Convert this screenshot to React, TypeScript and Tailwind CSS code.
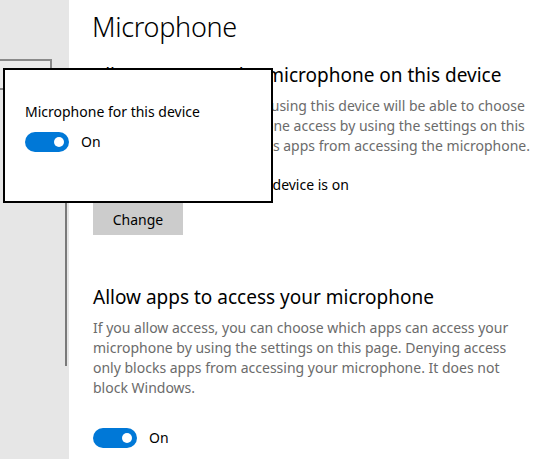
export default function App() {
  const font = { fontFamily: '"Segoe UI", "Noto Sans", "Open Sans", sans-serif' };
  return (
    <div className="relative flex h-[459px] w-[540px] overflow-hidden bg-white" style={font}>
      <div className="relative w-[69px] shrink-0 bg-[#e6e6e6]">
        <div className="mt-[59px] ml-[-10px] h-[31px] w-[62px] border-2 border-[#8a8a8a] bg-[#ebebeb]" />
        <div className="absolute left-[65px] top-[200px] h-[166px] w-[2px] bg-[#7a7a7a]" />
      </div>
      <div className="flex flex-col pl-[24px] pt-[8px]">
        <div className="ml-[-1px] text-[27px] font-light leading-[38px] tracking-[-0.3px] text-black">Microphone</div>
        <div className="mt-[15px] text-[19px] leading-[28px] text-black">Allow access to the microphone on this device</div>
        <div className="mt-[7px] w-[440px] text-[14px] leading-[20px] text-[#6b6b6b]">
          If you allow access, people using this device will be able to choose if their apps have microphone access by using the settings on this page. Denying access blocks apps from accessing the microphone.
        </div>
        <div className="mt-[19px] text-[14px] leading-[20px] text-black">Microphone access for this device is on</div>
        <button className="mt-[8px] h-[32px] w-[90px] bg-[#cccccc] text-[14px] text-black">Change</button>
        <div className="mt-[48px] text-[19px] leading-[28px] text-black">Allow apps to access your microphone</div>
        <div className="mt-[7px] w-[440px] text-[14px] leading-[20px] text-[#6b6b6b]">
          If you allow access, you can choose which apps can access your microphone by using the settings on this page. Denying access only blocks apps from accessing your microphone. It does not block Windows.
        </div>
        <div className="mt-[29px] flex items-center gap-[12px]">
          <div className="flex h-[20px] w-[44px] items-center justify-end rounded-full bg-[#0078d7] pr-[5px]">
            <div className="h-[10px] w-[10px] rounded-full bg-white" />
          </div>
          <span className="text-[14px] text-black">On</span>
        </div>
      </div>
      <div className="absolute left-[3px] top-[68px] h-[135px] w-[270px] border-2 border-black bg-white px-[20px] pt-[32px]">
        <div className="text-[14px] leading-[20px] text-black">Microphone for this device</div>
        <div className="mt-[9px] flex items-center gap-[12px]">
          <div className="flex h-[20px] w-[44px] items-center justify-end rounded-full bg-[#0078d7] pr-[5px]">
            <div className="h-[10px] w-[10px] rounded-full bg-white" />
          </div>
          <span className="text-[14px] text-black">On</span>
        </div>
      </div>
    </div>
  );
}
